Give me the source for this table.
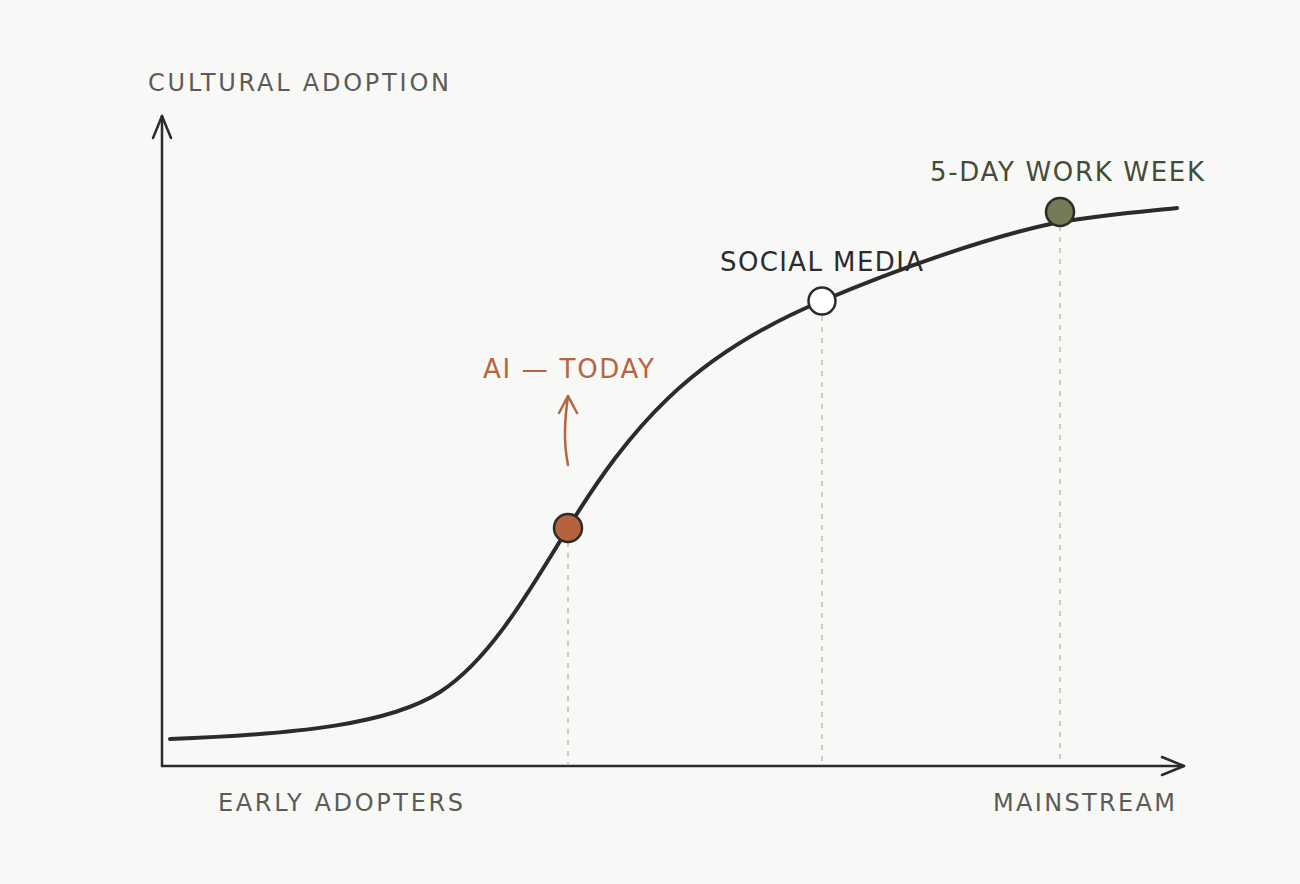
const FONT = { fontFamily: '"DejaVu Sans", "Liberation Sans", sans-serif' };

function Label({ x, y, width, size = 24, color, children }) {
  return (
    <text x={x} y={y} fontSize={size} fill={color} textLength={width} lengthAdjust="spacing" style={FONT}>
      {children}
    </text>
  );
}

export default function App() {
  return (
    <div className="h-[884px] w-[1300px] bg-[#f8f8f6]">
      <svg width="1300" height="884" viewBox="0 0 1300 884" className="block">
        {/* axes */}
        <g stroke="#2b2b2b" strokeWidth="2.5" fill="none" strokeLinecap="round" strokeLinejoin="round">
          <path d="M162 766 V116" />
          <path d="M153 138 L162 116 L171 138" />
          <path d="M162 766 H1184" />
          <path d="M1162 757 L1184 766 L1162 775" />
        </g>

        {/* guides */}
        <g stroke="#bdbdb8" strokeWidth="1.5" strokeDasharray="5 6">
          <path d="M568 542 V764" />
          <path d="M822 316 V764" />
          <path d="M1060 226 V764" />
        </g>

        {/* curve */}
        <path
          d="M170 739 C300 734 390 724 440 692 C490 660 530 590 568 528 C630 428 690 356 822 301 C895 270 990 236 1060 222 C1110 214 1150 211 1177 208"
          stroke="#2b2b2b"
          strokeWidth="4"
          fill="none"
          strokeLinecap="round"
        />

        {/* AI arrow */}
        <g stroke="#b5653f" strokeWidth="2.5" fill="none" strokeLinecap="round" strokeLinejoin="round">
          <path d="M568 465 C563 440 565 418 568 396" />
          <path d="M559 413 L568 396 L577 413" />
        </g>

        {/* points */}
        <g stroke="#2b2b2b" strokeWidth="2.5">
          <circle cx="568" cy="528" r="14" fill="#b5633d" />
          <circle cx="822" cy="301" r="13.5" fill="#ffffff" />
          <circle cx="1060" cy="212" r="14" fill="#737b57" />
        </g>

        <Label x={148} y={91} width={301} color="#5c5c57">CULTURAL ADOPTION</Label>
        <Label x={483} y={378} width={171} size={26} color="#b5653f">AI — TODAY</Label>
        <Label x={720} y={271} width={203} size={26} color="#2b2b2b">SOCIAL MEDIA</Label>
        <Label x={930} y={181} width={274} size={26} color="#454c36">5-DAY WORK WEEK</Label>
        <Label x={218} y={811} width={245} color="#5c5c57">EARLY ADOPTERS</Label>
        <Label x={993} y={811} width={182} color="#5c5c57">MAINSTREAM</Label>
      </svg>
    </div>
  );
}
